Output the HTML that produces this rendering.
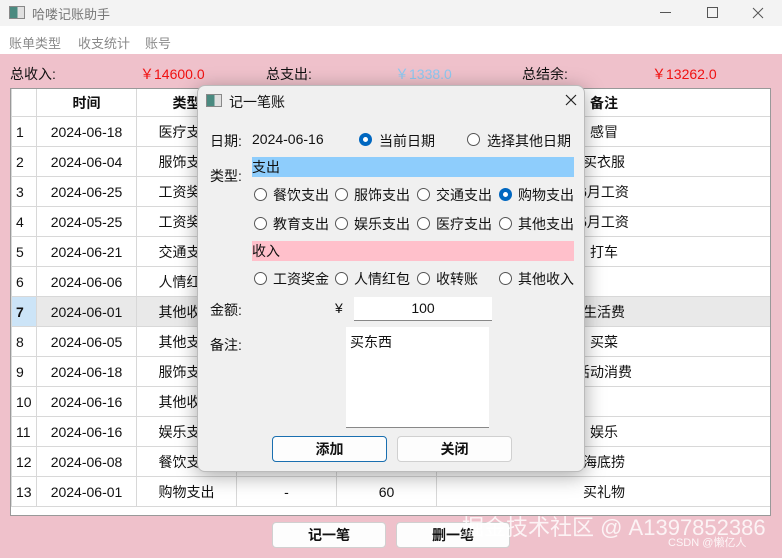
<!DOCTYPE html>
<html><head><meta charset="utf-8"><style>
*{margin:0;padding:0;box-sizing:border-box}
body{width:782px;height:558px;overflow:hidden;position:relative;background:#efc1cb;font-family:"Liberation Sans","Noto Sans CJK SC",sans-serif;font-size:14px;color:#111}
.a{position:absolute}
.title{left:0;top:0;width:782px;height:26px;background:#f3f3f3}
.menu{left:0;top:26px;width:782px;height:28px;background:#fff;color:#8a8a8a;font-size:13px}
.ico{width:16px;height:13px;border:1px solid #888;background:linear-gradient(90deg,#4a8a80 0 55%,#e0e0e0 55%)}
table{border-collapse:collapse;table-layout:fixed}
td{height:30px;border:1px solid #d8d8d8;text-align:center;white-space:nowrap;overflow:hidden;font-size:14px;padding:0}
td.n{text-align:left;padding-left:4px}
tr.h td{font-weight:bold;background:#fff;height:28px}
tr.sel td{background:#e9e9e9}
.rad{width:13px;height:13px;border:1px solid #555;border-radius:50%;background:#fff;display:inline-block}
.rad.on{border:4px solid #0067c0}
.dlg{left:197px;top:85px;width:388px;height:387px;background:#f0f0f0;border-radius:8px;box-shadow:0 4px 20px rgba(0,0,0,.35);border:1px solid #bbb}
.btn{background:#fdfdfd;border:1px solid #d0d0d0;border-radius:4px;text-align:center;font-weight:bold;line-height:24px}
</style></head><body>
<div class="a title">
 <div class="a ico" style="left:9px;top:6px"></div>
 <div class="a" style="left:32px;top:4px;color:#777;font-size:13px">哈喽记账助手</div>
 <div class="a" style="left:660px;top:12px;width:11px;height:1px;background:#555"></div>
 <div class="a" style="left:707px;top:7px;width:11px;height:11px;border:1px solid #555"></div>
 <svg class="a" style="left:752px;top:7px" width="12" height="12"><path d="M1 1L11 11M11 1L1 11" stroke="#555" stroke-width="1"/></svg>
</div>
<div class="a menu"><span class="a" style="left:9px;top:7px">账单类型</span><span class="a" style="left:78px;top:7px">收支统计</span><span class="a" style="left:145px;top:7px">账号</span></div>
<div class="a" style="left:10px;top:64px">总收入:</div>
<div class="a" style="left:140px;top:64px;color:#f01010">￥14600.0</div>
<div class="a" style="left:266px;top:64px">总支出:</div>
<div class="a" style="left:395px;top:64px;color:#8ec8f0">￥1338.0</div>
<div class="a" style="left:522px;top:64px">总结余:</div>
<div class="a" style="left:652px;top:64px;color:#f01010">￥13262.0</div>
<div class="a" style="left:10px;top:88px;width:761px;height:428px;background:#fff;border:1px solid #999;overflow:hidden">
<table style="width:760px;margin-top:-1px">
<colgroup><col style="width:25px"><col style="width:100px"><col style="width:100px"><col style="width:100px"><col style="width:100px"><col style="width:335px"></colgroup>
<tr class="h"><td></td><td>时间</td><td>类型</td><td>收入</td><td>支出</td><td>备注</td></tr>
<tr><td class="n">1</td><td>2024-06-18</td><td>医疗支出</td><td>-</td><td>200</td><td>感冒</td></tr>
<tr><td class="n">2</td><td>2024-06-04</td><td>服饰支出</td><td>-</td><td>300</td><td>买衣服</td></tr>
<tr><td class="n">3</td><td>2024-06-25</td><td>工资奖金</td><td>7000</td><td>-</td><td>6月工资</td></tr>
<tr><td class="n">4</td><td>2024-05-25</td><td>工资奖金</td><td>7000</td><td>-</td><td>5月工资</td></tr>
<tr><td class="n">5</td><td>2024-06-21</td><td>交通支出</td><td>-</td><td>30</td><td>打车</td></tr>
<tr><td class="n">6</td><td>2024-06-06</td><td>人情红包</td><td>200</td><td>-</td><td></td></tr>
<tr class="sel"><td class="n" style="font-weight:bold;background:#cce4f7">7</td><td>2024-06-01</td><td>其他收入</td><td>400</td><td>-</td><td>生活费</td></tr>
<tr><td class="n">8</td><td>2024-06-05</td><td>其他支出</td><td>-</td><td>50</td><td>买菜</td></tr>
<tr><td class="n">9</td><td>2024-06-18</td><td>服饰支出</td><td>-</td><td>300</td><td>活动消费</td></tr>
<tr><td class="n">10</td><td>2024-06-16</td><td>其他收入</td><td>0</td><td>-</td><td></td></tr>
<tr><td class="n">11</td><td>2024-06-16</td><td>娱乐支出</td><td>-</td><td>100</td><td>娱乐</td></tr>
<tr><td class="n">12</td><td>2024-06-08</td><td>餐饮支出</td><td>-</td><td>298</td><td>海底捞</td></tr>
<tr><td class="n">13</td><td>2024-06-01</td><td>购物支出</td><td>-</td><td>60</td><td>买礼物</td></tr>
</table></div>
<div class="a btn" style="left:272px;top:522px;width:114px;height:26px">记一笔</div>
<div class="a btn" style="left:396px;top:522px;width:114px;height:26px">删一笔</div>
<div class="a" style="left:462px;top:510px;font-size:22px;color:rgba(255,255,255,.8)">掘金技术社区 @ A1397852386</div>
<div class="a" style="left:668px;top:534px;font-size:11px;color:rgba(255,255,255,.85)">CSDN @懒亿人</div>

<div class="a dlg">
 <div class="a ico" style="left:8px;top:8px"></div>
 <div class="a" style="left:31px;top:6px">记一笔账</div>
 <svg class="a" style="left:367px;top:8px" width="12" height="12"><path d="M1 1L11 11M11 1L1 11" stroke="#222" stroke-width="1.2"/></svg>
 <div class="a" style="left:12px;top:45px">日期:</div>
 <div class="a" style="left:54px;top:45px">2024-06-16</div>
 <span class="a rad on" style="left:161px;top:47px"></span><div class="a" style="left:181px;top:45px">当前日期</div>
 <span class="a rad" style="left:269px;top:47px"></span><div class="a" style="left:289px;top:45px">选择其他日期</div>
 <div class="a" style="left:12px;top:80px">类型:</div>
 <div class="a" style="left:54px;top:71px;width:322px;height:20px;background:#8ecdfc;line-height:20px">支出</div>
 <span class="a rad" style="left:56px;top:102px"></span><div class="a" style="left:75px;top:99px">餐饮支出</div>
 <span class="a rad" style="left:137px;top:102px"></span><div class="a" style="left:156px;top:99px">服饰支出</div>
 <span class="a rad" style="left:219px;top:102px"></span><div class="a" style="left:238px;top:99px">交通支出</div>
 <span class="a rad on" style="left:301px;top:102px"></span><div class="a" style="left:320px;top:99px">购物支出</div>
 <span class="a rad" style="left:56px;top:131px"></span><div class="a" style="left:75px;top:128px">教育支出</div>
 <span class="a rad" style="left:137px;top:131px"></span><div class="a" style="left:156px;top:128px">娱乐支出</div>
 <span class="a rad" style="left:219px;top:131px"></span><div class="a" style="left:238px;top:128px">医疗支出</div>
 <span class="a rad" style="left:301px;top:131px"></span><div class="a" style="left:320px;top:128px">其他支出</div>
 <div class="a" style="left:54px;top:155px;width:322px;height:20px;background:#ffc0cb;line-height:20px">收入</div>
 <span class="a rad" style="left:56px;top:186px"></span><div class="a" style="left:75px;top:183px">工资奖金</div>
 <span class="a rad" style="left:137px;top:186px"></span><div class="a" style="left:156px;top:183px">人情红包</div>
 <span class="a rad" style="left:219px;top:186px"></span><div class="a" style="left:238px;top:183px">收转账</div>
 <span class="a rad" style="left:301px;top:186px"></span><div class="a" style="left:320px;top:183px">其他收入</div>
 <div class="a" style="left:12px;top:214px">金额:</div>
 <div class="a" style="left:137px;top:214px">¥</div>
 <div class="a" style="left:156px;top:211px;width:138px;height:24px;background:#fff;border-bottom:1px solid #888;text-align:center;line-height:23px">100</div>
 <div class="a" style="left:12px;top:249px">备注:</div>
 <div class="a" style="left:148px;top:241px;width:143px;height:101px;background:#fff;border-bottom:1px solid #888;padding:5px 4px">买东西</div>
 <div class="a btn" style="left:74px;top:350px;width:115px;height:26px;border-color:#1a6fb0">添加</div>
 <div class="a btn" style="left:199px;top:350px;width:115px;height:26px">关闭</div>
</div>
</body></html>
